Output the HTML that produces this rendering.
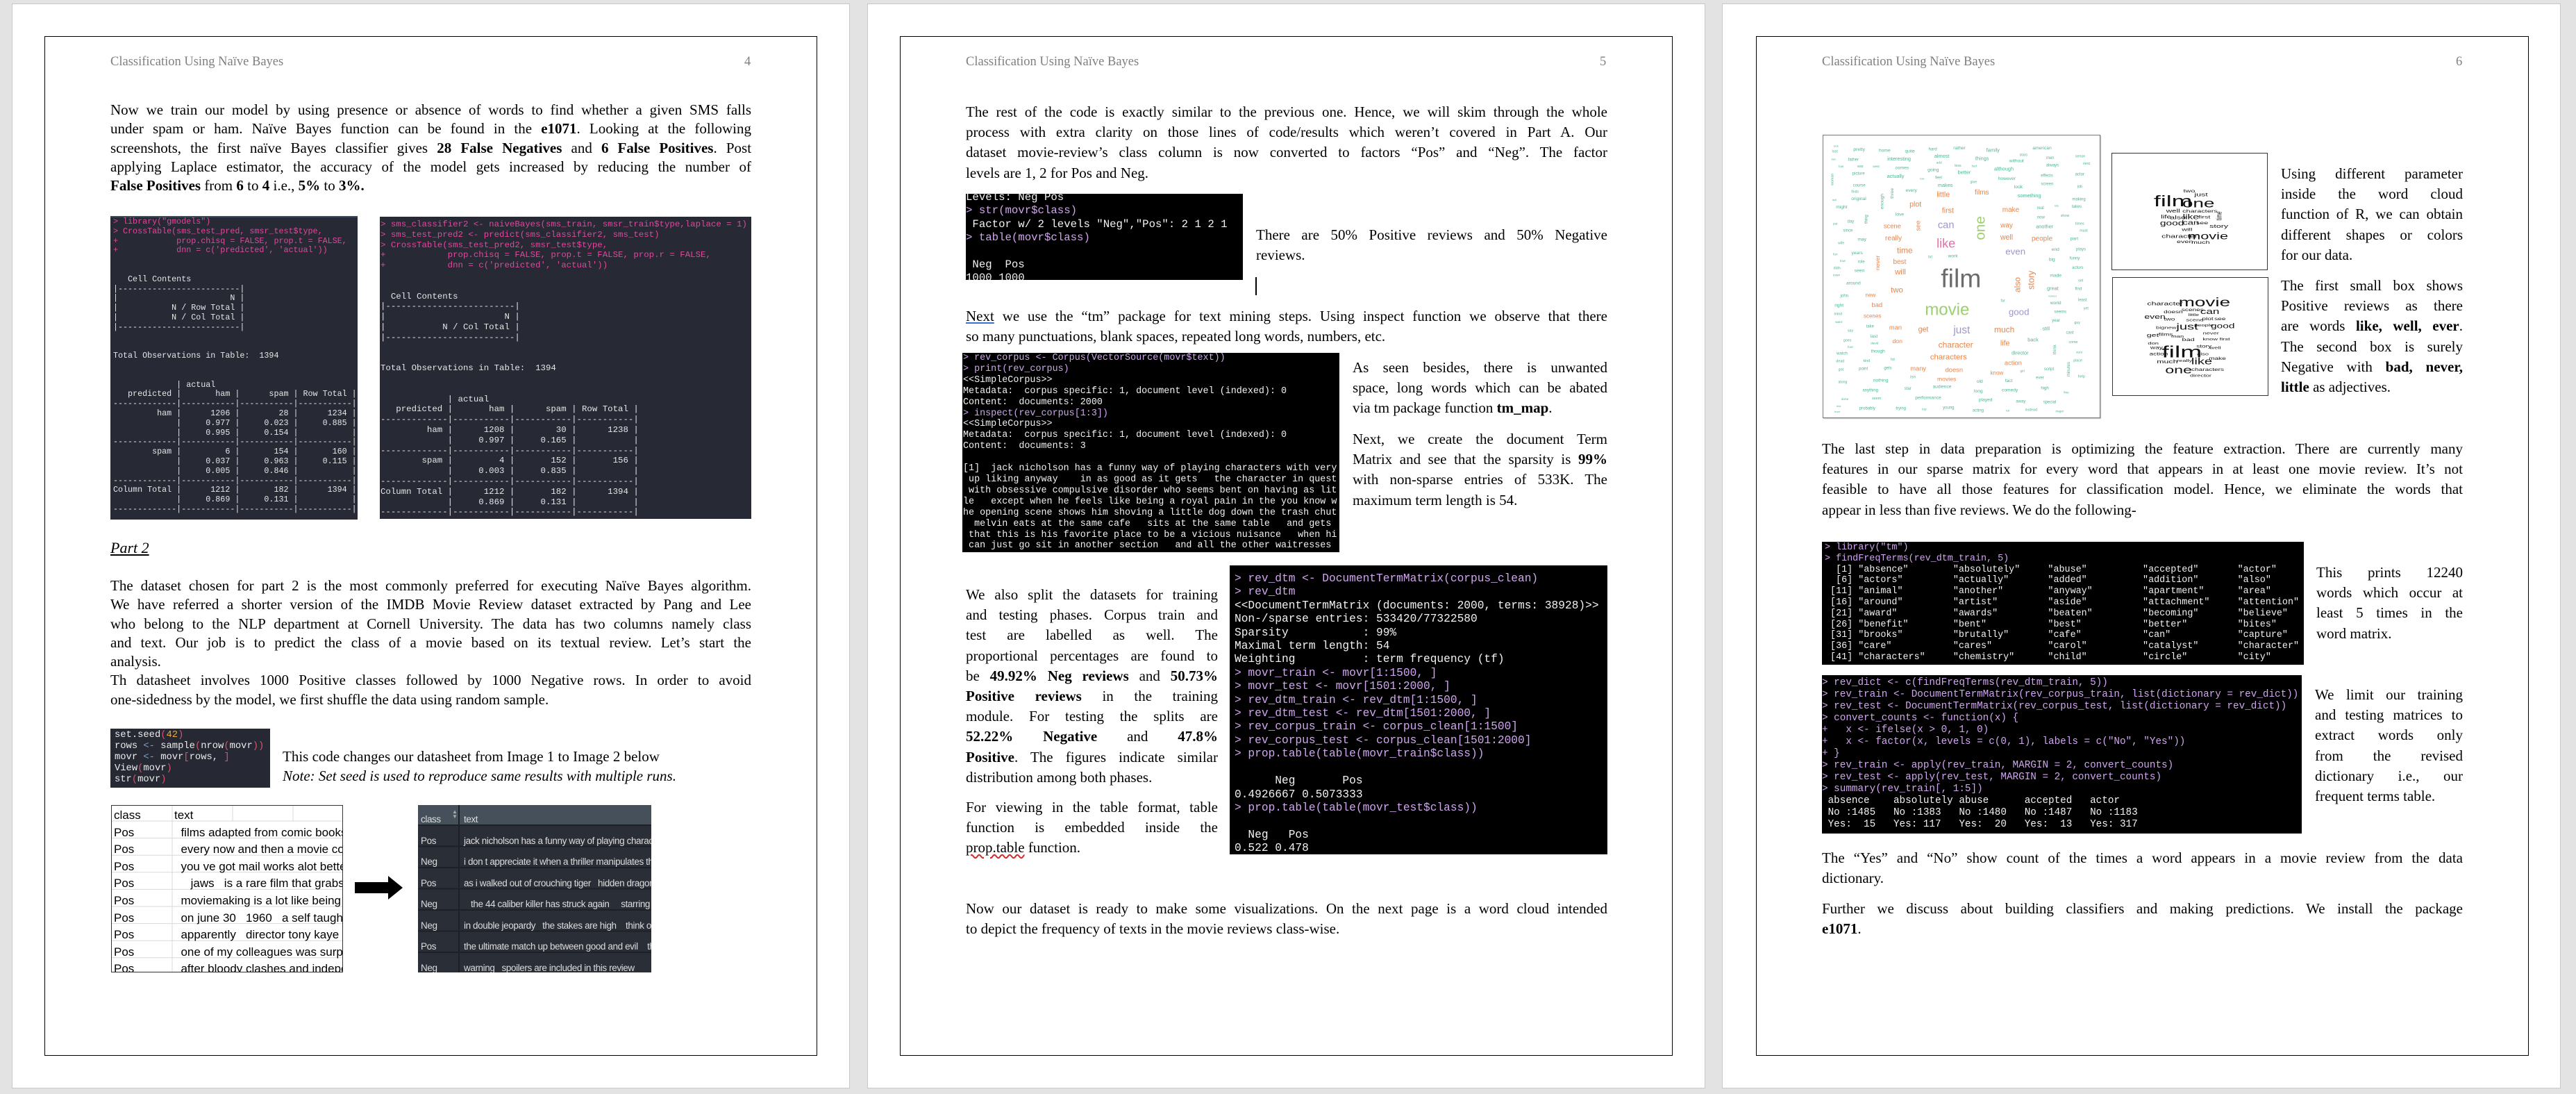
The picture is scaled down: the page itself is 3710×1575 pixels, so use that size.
<!DOCTYPE html>
<html><head><meta charset="utf-8">
<style>
*{margin:0;padding:0;box-sizing:border-box}
body{width:3710px;height:1575px;background:#e3e3e3;position:relative;overflow:hidden;font-family:"Liberation Serif",serif;color:#000}
.pg{position:absolute;top:5px;height:1562px;background:#fff;border:1px solid #c8c8c8}
.bx{position:absolute;border:1.5px solid #000}
.a{position:absolute}
.hd{position:absolute;font-size:18.5px;color:#7f7f7f;line-height:20px}
.t{position:absolute;font-size:21px}
.t div{white-space:nowrap;text-align:justify;text-align-last:justify}
.t div.l{text-align-last:left}
.p1 div{height:27.3px;line-height:27.3px}
.p2 div{height:29.2px;line-height:29.2px}
pre{font-family:"Liberation Mono",monospace;white-space:pre;margin:0}
.cb{position:absolute;overflow:hidden}
.pk{color:#e0489c}
.pu{color:#cfa6ee}
</style></head><body>

<!-- PAGES -->
<div class="pg" style="left:17px;width:1207px"></div>
<div class="pg" style="left:1249px;width:1207px"></div>
<div class="pg" style="left:2480px;width:1208px"></div>
<div class="bx" style="left:64px;top:52px;width:1113px;height:1468px"></div>
<div class="bx" style="left:1296px;top:52px;width:1113px;height:1468px"></div>
<div class="bx" style="left:2529px;top:52px;width:1113px;height:1468px"></div>

<!-- ================= PAGE 1 ================= -->
<div class="hd" style="left:159px;top:79px">Classification Using Naïve Bayes</div>
<div class="hd" style="left:1072px;top:79px">4</div>

<div class="t p1" style="left:159px;top:145px;width:923px">
<div>Now we train our model by using presence or absence of words to find whether a given SMS falls</div>
<div>under spam or ham. Naïve Bayes function can be found in the <b>e1071</b>. Looking at the following</div>
<div>screenshots, the first naïve Bayes classifier gives <b>28 False Negatives</b> and <b>6 False Positives</b>. Post</div>
<div>applying Laplace estimator, the accuracy of the model gets increased by reducing the number of</div>
<div class="l"><b>False Positives</b> from <b>6</b> to <b>4</b> i.e., <b>5%</b> to <b>3%.</b></div>
</div>

<div class="cb" style="left:159px;top:311px;width:356px;height:437px;background:#272935;border-top:2px solid #3a4a5a">
<pre style="font-size:11.7px;line-height:13.8px;color:#e6e6e6;padding:0 0 0 4px"><span class="pk">&gt; library("gmodels")
&gt; CrossTable(sms_test_pred, smsr_test$type,
+            prop.chisq = FALSE, prop.t = FALSE,
+            dnn = c('predicted', 'actual'))</span>


   Cell Contents
|-------------------------|
|                       N |
|           N / Row Total |
|           N / Col Total |
|-------------------------|


Total Observations in Table:  1394


             | actual 
   predicted |       ham |      spam | Row Total | 
-------------|-----------|-----------|-----------|
         ham |      1206 |        28 |      1234 | 
             |     0.977 |     0.023 |     0.885 | 
             |     0.995 |     0.154 |           | 
-------------|-----------|-----------|-----------|
        spam |         6 |       154 |       160 | 
             |     0.037 |     0.963 |     0.115 | 
             |     0.005 |     0.846 |           | 
-------------|-----------|-----------|-----------|
Column Total |      1212 |       182 |      1394 | 
             |     0.869 |     0.131 |           | 
-------------|-----------|-----------|-----------|</pre></div>

<div class="cb" style="left:547px;top:312px;width:535px;height:435px;background:#272935">
<pre style="font-size:12.4px;line-height:14.8px;color:#e6e6e6;padding:4px 0 0 1px"><span class="pk">&gt; sms_classifier2 &lt;- naiveBayes(sms_train, smsr_train$type,laplace = 1)
&gt; sms_test_pred2 &lt;- predict(sms_classifier2, sms_test)
&gt; CrossTable(sms_test_pred2, smsr_test$type,
+            prop.chisq = FALSE, prop.t = FALSE, prop.r = FALSE,
+            dnn = c('predicted', 'actual'))</span>


  Cell Contents
|-------------------------|
|                       N |
|           N / Col Total |
|-------------------------|


Total Observations in Table:  1394


             | actual 
   predicted |       ham |      spam | Row Total | 
-------------|-----------|-----------|-----------|
         ham |      1208 |        30 |      1238 | 
             |     0.997 |     0.165 |           | 
-------------|-----------|-----------|-----------|
        spam |         4 |       152 |       156 | 
             |     0.003 |     0.835 |           | 
-------------|-----------|-----------|-----------|
Column Total |      1212 |       182 |      1394 | 
             |     0.869 |     0.131 |           | 
-------------|-----------|-----------|-----------|</pre></div>

<div class="a" style="left:159px;top:775px;font-size:22px;font-style:italic;text-decoration:underline;line-height:28px">Part 2</div>

<div class="t p1" style="left:159px;top:830px;width:923px">
<div>The dataset chosen for part 2 is the most commonly preferred for executing Naïve Bayes algorithm.</div>
<div>We have referred a shorter version of the IMDB Movie Review dataset extracted by Pang and Lee</div>
<div>who belong to the NLP department at Cornell University. The data has two columns namely class</div>
<div>and text. Our job is to predict the class of a movie based on its textual review. Let’s start the</div>
<div class="l">analysis.</div>
<div>Th datasheet involves 1000 Positive classes followed by 1000 Negative rows. In order to avoid</div>
<div class="l">one-sidedness by the model, we first shuffle the data using random sample.</div>
</div>

<div class="cb" style="left:159px;top:1049px;width:230px;height:85px;background:#262833">
<pre style="font-size:13.8px;line-height:16px;color:#ececec;padding:2px 0 0 6px">set.seed<span style="color:#e0506a">(</span><span style="color:#e8a84a">42</span><span style="color:#e0506a">)</span>
rows <span style="color:#7aa0c8">&lt;-</span> sample<span style="color:#e0506a">(</span>nrow<span style="color:#e0506a">(</span>movr<span style="color:#e0506a">))</span>
movr <span style="color:#7aa0c8">&lt;-</span> movr<span style="color:#e0506a">[</span>rows, <span style="color:#e0506a">]</span>
View<span style="color:#e0506a">(</span>movr<span style="color:#e0506a">)</span>
str<span style="color:#e0506a">(</span>movr<span style="color:#e0506a">)</span></pre></div>

<div class="t" style="left:407px;top:1075px;line-height:28px;white-space:nowrap">This code changes our datasheet from Image 1 to Image 2 below<br><i>Note: Set seed is used to reproduce same results with multiple runs.</i></div>

<!-- table 1 -->
<div class="a" style="left:160px;top:1159px;width:334px;height:241px;border:1.5px solid #333;overflow:hidden;background:#fff;font-family:'Liberation Sans',sans-serif;font-size:17px">
<svg width="334" height="241" style="position:absolute;left:0;top:0">
<g stroke="#dadada" stroke-width="1">
<line x1="87" y1="0" x2="87" y2="241"/><line x1="174" y1="0" x2="174" y2="22"/><line x1="261" y1="0" x2="261" y2="22"/>
<line x1="0" y1="22" x2="334" y2="22"/><line x1="0" y1="46.6" x2="334" y2="46.6"/><line x1="0" y1="71.2" x2="334" y2="71.2"/><line x1="0" y1="95.8" x2="334" y2="95.8"/><line x1="0" y1="120.4" x2="334" y2="120.4"/><line x1="0" y1="145" x2="334" y2="145"/><line x1="0" y1="169.6" x2="334" y2="169.6"/><line x1="0" y1="194.2" x2="334" y2="194.2"/><line x1="0" y1="218.8" x2="334" y2="218.8"/>
</g></svg>
<div class="a" style="left:3px;top:2px;line-height:24.6px;white-space:pre">class<br>Pos<br>Pos<br>Pos<br>Pos<br>Pos<br>Pos<br>Pos<br>Pos<br>Pos</div>
<div class="a" style="left:90px;top:2px;line-height:24.6px;white-space:pre">text<br>  films adapted from comic books<br>  every now and then a movie comes<br>  you ve got mail works alot better<br>     jaws   is a rare film that grabs<br>  moviemaking is a lot like being<br>  on june 30   1960   a self taught<br>  apparently   director tony kaye<br>  one of my colleagues was surprised<br>  after bloody clashes and independence</div>
</div>

<!-- arrow -->
<svg class="a" style="left:511px;top:1261px" width="70" height="35"><polygon points="0,9 48,9 48,0 69,17 48,34 48,25 0,25" fill="#000"/></svg>

<!-- table 2 -->
<div class="a" style="left:602px;top:1159px;width:336px;height:241px;background:#2a2e37;overflow:hidden;font-family:'Liberation Sans',sans-serif;font-size:13.5px;color:#dcdcdc;letter-spacing:-0.4px">
<div class="a" style="left:0;top:0;width:336px;height:29px;background:#46505b"></div>
<div class="a" style="left:58px;top:0;width:2px;height:241px;background:#1d2027"></div>
<svg width="336" height="241" style="position:absolute;left:0;top:0"><g stroke="#1d2027" stroke-width="2">
<line x1="0" y1="29" x2="336" y2="29"/><line x1="0" y1="59.5" x2="336" y2="59.5"/><line x1="0" y1="90" x2="336" y2="90"/><line x1="0" y1="120.5" x2="336" y2="120.5"/><line x1="0" y1="151" x2="336" y2="151"/><line x1="0" y1="181.5" x2="336" y2="181.5"/><line x1="0" y1="212" x2="336" y2="212"/></g>
<text x="49" y="12" fill="#aaa" font-size="8" font-family="Liberation Sans">▲</text><text x="49" y="19" fill="#aaa" font-size="8" font-family="Liberation Sans">▼</text></svg>
<div class="a" style="left:4px;top:6px;line-height:30.5px;white-space:pre">class<br>Pos<br>Neg<br>Pos<br>Neg<br>Neg<br>Pos<br>Neg</div>
<div class="a" style="left:66px;top:6px;line-height:30.5px;white-space:pre">text<br>jack nicholson has a funny way of playing characters<br>i don t appreciate it when a thriller manipulates the<br>as i walked out of crouching tiger   hidden dragon<br>   the 44 caliber killer has struck again     starring j<br>in double jeopardy   the stakes are high    think of<br>the ultimate match up between good and evil    the<br>warning   spoilers are included in this review       b</div>
</div>

<!-- ================= PAGE 2 ================= -->
<div class="hd" style="left:1391px;top:79px">Classification Using Naïve Bayes</div>
<div class="hd" style="left:2304px;top:79px">5</div>

<div class="t p2" style="left:1391px;top:147px;width:924px">
<div>The rest of the code is exactly similar to the previous one. Hence, we will skim through the whole</div>
<div>process with extra clarity on those lines of code/results which weren’t covered in Part A. Our</div>
<div>dataset movie-review’s class column is now converted to factors “Pos” and “Neg”. The factor</div>
<div class="l">levels are 1, 2 for Pos and Neg.</div>
</div>

<div class="cb" style="left:1391px;top:279px;width:399px;height:124px;background:#000">
<pre style="font-size:15.7px;line-height:19.4px;color:#f2f2f2;margin-top:-4px">Levels: Neg Pos
<span class="pu">&gt; str(movr$class)</span>
 Factor w/ 2 levels "Neg","Pos": 2 1 2 1
<span class="pu">&gt; table(movr$class)</span>

 Neg  Pos 
1000 1000 </pre></div>

<div class="t p2" style="left:1809px;top:324px;width:506px">
<div>There are 50% Positive reviews and 50% Negative</div>
<div class="l">reviews.</div>
</div>
<div class="a" style="left:1808px;top:399px;width:2px;height:26px;background:#000"></div>

<div class="t p2" style="left:1391px;top:441px;width:924px">
<div><span style="text-decoration:underline;text-decoration-color:#3b6fd0">Next</span> we use the “tm” package for text mining steps. Using inspect function we observe that there</div>
<div class="l">so many punctuations, blank spaces, repeated long words, numbers, etc.</div>
</div>

<div class="cb" style="left:1386px;top:508px;width:543px;height:287px;background:#000">
<pre style="font-size:13.4px;line-height:15.9px;color:#f2f2f2;padding-left:1px"><span class="pu">&gt; rev_corpus &lt;- Corpus(VectorSource(movr$text))
&gt; print(rev_corpus)</span>
&lt;&lt;SimpleCorpus&gt;&gt;
Metadata:  corpus specific: 1, document level (indexed): 0
Content:  documents: 2000
<span class="pu">&gt; inspect(rev_corpus[1:3])</span>
&lt;&lt;SimpleCorpus&gt;&gt;
Metadata:  corpus specific: 1, document level (indexed): 0
Content:  documents: 3

[1]  jack nicholson has a funny way of playing characters with very
 up liking anyway    in as good as it gets   the character in quest
 with obsessive compulsive disorder who seems bent on having as lit
le   except when he feels like being a royal pain in the you know w
he opening scene shows him shoving a little dog down the trash chut
  melvin eats at the same cafe   sits at the same table   and gets
 that this is his favorite place to be a vicious nuisance   when hi
 can just go sit in another section   and all the other waitresses</pre></div>

<div class="t p2" style="left:1948px;top:515px;width:367px">
<div>As seen besides, there is unwanted</div>
<div>space, long words which can be abated</div>
<div class="l">via tm package function <b>tm_map</b>.</div>
</div>
<div class="t p2" style="left:1948px;top:618px;width:367px">
<div>Next, we create the document Term</div>
<div>Matrix and see that the sparsity is <b>99%</b></div>
<div>with non-sparse entries of 533K. The</div>
<div class="l">maximum term length is 54.</div>
</div>

<div class="t p2" style="left:1391px;top:842px;width:363px">
<div>We also split the datasets for training</div>
<div>and testing phases. Corpus train and</div>
<div>test are labelled as well. The</div>
<div>proportional percentages are found to</div>
<div>be <b>49.92% Neg reviews</b> and <b>50.73%</b></div>
<div><b>Positive reviews</b> in the training</div>
<div>module. For testing the splits are</div>
<div><b>52.22% Negative</b> and <b>47.8%</b></div>
<div><b>Positive</b>. The figures indicate similar</div>
<div class="l">distribution among both phases.</div>
</div>
<div class="t p2" style="left:1391px;top:1148px;width:363px">
<div>For viewing in the table format, table</div>
<div>function is embedded inside the</div>
<div class="l"><span style="text-decoration:underline wavy #d03030">prop.table</span> function.</div>
</div>

<div class="cb" style="left:1771px;top:814px;width:544px;height:416px;background:#000">
<pre style="font-size:16.2px;line-height:19.4px;color:#f2f2f2;padding:10px 0 0 7px"><span class="pu">&gt; rev_dtm &lt;- DocumentTermMatrix(corpus_clean)
&gt; rev_dtm</span>
&lt;&lt;DocumentTermMatrix (documents: 2000, terms: 38928)&gt;&gt;
Non-/sparse entries: 533420/77322580
Sparsity           : 99%
Maximal term length: 54
Weighting          : term frequency (tf)
<span class="pu">&gt; movr_train &lt;- movr[1:1500, ]
&gt; movr_test &lt;- movr[1501:2000, ]
&gt; rev_dtm_train &lt;- rev_dtm[1:1500, ]
&gt; rev_dtm_test &lt;- rev_dtm[1501:2000, ]
&gt; rev_corpus_train &lt;- corpus_clean[1:1500]
&gt; rev_corpus_test &lt;- corpus_clean[1501:2000]
&gt; prop.table(table(movr_train$class))</span>

      Neg       Pos 
0.4926667 0.5073333 
<span class="pu">&gt; prop.table(table(movr_test$class))</span>

  Neg   Pos 
0.522 0.478 </pre></div>

<div class="t p2" style="left:1391px;top:1294px;width:924px">
<div>Now our dataset is ready to make some visualizations. On the next page is a word cloud intended</div>
<div class="l">to depict the frequency of texts in the movie reviews class-wise.</div>
</div>

<!-- ================= PAGE 3 ================= -->
<div class="hd" style="left:2624px;top:79px">Classification Using Naïve Bayes</div>
<div class="hd" style="left:3537px;top:79px">6</div>

<div class="a" style="left:2625px;top:194px;width:400px;height:408px;border:1px solid #777;box-shadow:1px 1px 1px #bbb;background:#fff;overflow:hidden">
<svg width="400" height="408" viewBox="0 0 1200 1224" font-family="Liberation Sans, sans-serif" text-anchor="middle">
<g fill="#4db590">
<text x="155" y="66" font-size="20">pretty</text><text x="265" y="71" font-size="20">home</text><text x="374" y="73" font-size="20">quite</text><text x="473" y="64" font-size="18">hard</text><text x="588" y="60" font-size="20">rather</text><text x="733" y="71" font-size="22">family</text><text x="945" y="60" font-size="20">american</text><text x="55" y="50" font-size="12">luck</text><text x="50" y="73" font-size="16">lost</text><text x="45" y="107" font-size="12">ben</text><text x="130" y="110" font-size="18">father</text><text x="327" y="108" font-size="22">interesting</text><text x="512" y="96" font-size="22">almost</text><text x="686" y="107" font-size="22">things</text><text x="865" y="88" font-size="16">stars</text><text x="980" y="102" font-size="18">men</text><text x="1110" y="95" font-size="16">sense</text><text x="1137" y="126" font-size="16">next</text><text x="77" y="138" font-size="14">low</text><text x="160" y="138" font-size="16">war</text><text x="228" y="138" font-size="14">west</text><text x="340" y="145" font-size="20">comes</text><text x="500" y="122" font-size="14">add</text><text x="582" y="135" font-size="16">less</text><text x="652" y="136" font-size="13">hurt</text><text x="835" y="116" font-size="20">without</text><text x="990" y="133" font-size="18">always</text><text x="152" y="170" font-size="18">picture</text><text x="312" y="183" font-size="22">actually</text><text x="475" y="155" font-size="20">going</text><text x="609" y="167" font-size="22">better</text><text x="780" y="151" font-size="22">although</text><text x="1108" y="172" font-size="18">actor</text><text x="498" y="188" font-size="18">feel</text><text x="427" y="190" font-size="12">low</text><text x="793" y="192" font-size="20">however</text><text x="966" y="178" font-size="18">effects</text><text x="155" y="220" font-size="18">course</text><text x="527" y="222" font-size="22">makes</text><text x="649" y="206" font-size="16">give</text><text x="843" y="228" font-size="20">look</text><text x="967" y="214" font-size="18">screen</text><text x="1108" y="225" font-size="16">job</text><text x="137" y="247" font-size="15">finds</text><text x="380" y="243" font-size="20">every</text><text x="153" y="279" font-size="20">original</text><text x="890" y="267" font-size="22">something</text><text x="1104" y="280" font-size="18">making</text><text x="48" y="282" font-size="12">dull</text><text x="79" y="315" font-size="20">might</text><text x="1095" y="312" font-size="18">takes</text><text x="938" y="318" font-size="18">real</text><text x="330" y="347" font-size="20">love</text><text x="1008" y="307" font-size="12">lots</text><text x="940" y="359" font-size="18">now</text><text x="1044" y="351" font-size="16">show</text><text x="118" y="377" font-size="18">day</text><text x="52" y="386" font-size="14">put</text><text x="956" y="400" font-size="22">another</text><text x="1108" y="386" font-size="16">times</text><text x="106" y="416" font-size="18">since</text><text x="1125" y="415" font-size="16">must</text><text x="167" y="455" font-size="20">may</text><text x="1084" y="451" font-size="20">part</text><text x="77" y="469" font-size="15">wife</text><text x="1113" y="497" font-size="18">plays</text><text x="52" y="518" font-size="14">fun</text><text x="146" y="513" font-size="20">years</text><text x="1003" y="498" font-size="20">end</text><text x="1086" y="536" font-size="18">funny</text><text x="462" y="529" font-size="16">bit</text><text x="560" y="527" font-size="20">work</text><text x="164" y="550" font-size="18">role</text><text x="84" y="546" font-size="14">true</text><text x="988" y="541" font-size="20">big</text><text x="59" y="577" font-size="16">didn</text><text x="156" y="590" font-size="20">seen</text><text x="1099" y="576" font-size="18">actors</text><text x="57" y="608" font-size="14">town</text><text x="1004" y="611" font-size="20">made</text><text x="130" y="643" font-size="20">around</text><text x="1112" y="632" font-size="16">set</text><text x="991" y="667" font-size="22">great</text><text x="1102" y="667" font-size="18">find</text><text x="91" y="698" font-size="18">john</text><text x="990" y="697" font-size="12">turned</text><text x="68" y="740" font-size="20">right</text><text x="1120" y="716" font-size="18">least</text><text x="1004" y="729" font-size="20">world</text><text x="776" y="719" font-size="16">far</text><text x="64" y="775" font-size="16">mind</text><text x="1024" y="766" font-size="18">seems</text><text x="1135" y="752" font-size="16">yet</text><text x="66" y="810" font-size="14">want</text><text x="1005" y="804" font-size="18">year</text><text x="1097" y="813" font-size="16">guy</text><text x="202" y="829" font-size="18">take</text><text x="117" y="848" font-size="16">say</text><text x="962" y="842" font-size="22">still</text><text x="1065" y="856" font-size="18">cast</text><text x="219" y="873" font-size="20">last</text><text x="104" y="890" font-size="16">goes</text><text x="906" y="890" font-size="22">back</text><text x="1080" y="897" font-size="16">come</text><text x="221" y="902" font-size="14">david</text><text x="117" y="918" font-size="14">four</text><text x="236" y="937" font-size="20">though</text><text x="850" y="947" font-size="22">director</text><text x="1106" y="941" font-size="14">sure</text><text x="81" y="947" font-size="18">watch</text><text x="73" y="980" font-size="16">dead</text><text x="187" y="978" font-size="16">kind</text><text x="300" y="972" font-size="16">lot</text><text x="1100" y="976" font-size="16">place</text><text x="76" y="1015" font-size="16">got</text><text x="173" y="1012" font-size="18">point</text><text x="279" y="1010" font-size="18">gets</text><text x="975" y="1014" font-size="18">script</text><text x="860" y="1022" font-size="14">girl</text><text x="84" y="1069" font-size="16">along</text><text x="387" y="1049" font-size="18">isn</text><text x="676" y="1068" font-size="20">old</text><text x="801" y="1065" font-size="20">fact</text><text x="936" y="1051" font-size="18">ever</text><text x="1115" y="1046" font-size="16">help</text><text x="248" y="1064" font-size="20">nothing</text><text x="513" y="1091" font-size="20">audience</text><text x="365" y="1098" font-size="18">star</text><text x="957" y="1097" font-size="18">high</text><text x="203" y="1105" font-size="18">anything</text><text x="670" y="1110" font-size="20">long</text><text x="806" y="1105" font-size="20">comedy</text><text x="1050" y="1115" font-size="14">fine</text><text x="93" y="1143" font-size="14">done</text><text x="230" y="1140" font-size="16">seem</text><text x="453" y="1139" font-size="20">performance</text><text x="701" y="1148" font-size="20">played</text><text x="853" y="1153" font-size="18">away</text><text x="978" y="1157" font-size="18">special</text><text x="190" y="1184" font-size="18">probably</text><text x="335" y="1184" font-size="18">trying</text><text x="436" y="1186" font-size="14">top</text><text x="541" y="1181" font-size="18">young</text><text x="669" y="1192" font-size="18">acting</text><text x="797" y="1192" font-size="12">full</text><text x="898" y="1190" font-size="16">instead</text><text x="1021" y="1195" font-size="14">major</text><text x="66" y="1173" font-size="12">rest</text><text x="60" y="1197" font-size="12">boot</text>
<text transform="translate(303,250) rotate(-90)" font-size="20">three</text><text transform="translate(260,285) rotate(-90)" font-size="20">enough</text><text transform="translate(190,362) rotate(-90)" font-size="18">thing</text><text transform="translate(44,190) rotate(-90)" font-size="16">woman</text><text transform="translate(1005,925) rotate(-90)" font-size="20">think</text><text transform="translate(1065,1010) rotate(-90)" font-size="18">minutes</text>
</g>
<g fill="#e8854a">
<text x="352" y="508" font-size="36">time</text><text x="518" y="265" font-size="32">little</text><text x="685" y="255" font-size="30">films</text><text x="398" y="308" font-size="32">plot</text><text x="538" y="335" font-size="32">first</text><text x="810" y="330" font-size="30">make</text><text x="298" y="400" font-size="28">scene</text><text x="303" y="453" font-size="30">really</text><text x="792" y="398" font-size="30">way</text><text x="792" y="450" font-size="32">well</text><text x="945" y="455" font-size="30">people</text><text x="330" y="555" font-size="30">best</text><text x="333" y="600" font-size="34">will</text><text x="318" y="678" font-size="34">two</text><text x="204" y="697" font-size="24">new</text><text x="232" y="741" font-size="28">bad</text><text x="212" y="788" font-size="24">scenes</text><text x="312" y="838" font-size="28">man</text><text x="432" y="847" font-size="32">get</text><text x="782" y="850" font-size="36">much</text><text x="320" y="897" font-size="26">don</text><text x="785" y="908" font-size="32">life</text><text x="572" y="917" font-size="36">character</text><text x="541" y="968" font-size="34">characters</text><text x="820" y="991" font-size="28">action</text><text x="410" y="1015" font-size="28">many</text><text x="565" y="1022" font-size="28">doesn</text><text x="750" y="1033" font-size="24">know</text><text x="533" y="1060" font-size="26">movies</text>
<text transform="translate(418,390) rotate(-90)" font-size="28">see</text><text transform="translate(243,550) rotate(-90)" font-size="26">never</text><text transform="translate(850,645) rotate(-90)" font-size="36">also</text><text transform="translate(910,625) rotate(-90)" font-size="38">story</text>
</g>
<text x="595" y="655" font-size="112" fill="#6b6b6b">film</text>
<text x="535" y="775" font-size="72" fill="#9ccf72">movie</text>
<text transform="translate(698,400) rotate(-90)" font-size="62" fill="#9ccf72">one</text>
<text x="530" y="485" font-size="54" fill="#ee6aaa">like</text>
<text x="530" y="400" font-size="44" fill="#9c98cc">can</text>
<text x="830" y="515" font-size="40" fill="#9c98cc">even</text>
<text x="845" y="775" font-size="40" fill="#9c98cc">good</text>
<text x="598" y="855" font-size="46" fill="#9c98cc">just</text>
</svg></div>

<div class="a" style="left:3041px;top:220px;width:225px;height:169px;border:1px solid #333;overflow:hidden">
<svg width="225" height="169" viewBox="0 0 290 348" preserveAspectRatio="none" font-family="Liberation Sans, sans-serif" text-anchor="middle" fill="#111">
<text x="143" y="115" font-size="14">two</text><text x="165" y="127" font-size="16">just</text><text x="113" y="157" font-size="46">film</text><text x="160" y="160" font-size="36">one</text><text x="113" y="175" font-size="15">well</text><text x="163" y="175" font-size="14">characters</text><text x="100" y="193" font-size="15">life</text><text x="122" y="195" font-size="16">also</text><text x="146" y="195" font-size="20">like</text><text x="171" y="193" font-size="14">first</text><text x="111" y="213" font-size="20">good</text><text x="146" y="211" font-size="19">can</text><text x="167" y="210" font-size="14">see</text><text x="198" y="220" font-size="16">story</text><text x="139" y="230" font-size="14">will</text><text x="125" y="250" font-size="16">character</text><text x="178" y="254" font-size="28">movie</text><text x="135" y="266" font-size="14">even</text><text x="164" y="268" font-size="14">much</text><text transform="translate(203,185) rotate(-90)" font-size="14">time</text>
</svg></div>

<div class="a" style="left:3042px;top:399px;width:225px;height:171px;border:1px solid #333;overflow:hidden">
<svg width="225" height="171" viewBox="0 0 290 353" preserveAspectRatio="none" font-family="Liberation Sans, sans-serif" text-anchor="middle" fill="#111">
<text x="97" y="82" font-size="16">character</text><text x="170" y="85" font-size="36">movie</text><text x="112" y="105" font-size="13">doesn</text><text x="148" y="99" font-size="13">scenes</text><text x="180" y="107" font-size="22">can</text><text x="78" y="122" font-size="18">even</text><text x="105" y="127" font-size="13">two</text><text x="150" y="114" font-size="11">little</text><text x="152" y="129" font-size="12">scene</text><text x="176" y="126" font-size="13">plot</text><text x="199" y="126" font-size="13">see</text><text x="99" y="152" font-size="12">bignew</text><text x="138" y="154" font-size="26">just</text><text x="169" y="145" font-size="12">people</text><text x="204" y="150" font-size="20">good</text><text x="182" y="168" font-size="12">never</text><text x="74" y="175" font-size="16">get</text><text x="98" y="172" font-size="13">films</text><text x="120" y="178" font-size="12">man</text><text x="140" y="188" font-size="14">bad</text><text x="192" y="186" font-size="12">know first</text><text x="75" y="198" font-size="12">don</text><text x="81" y="212" font-size="13">way</text><text x="128" y="236" font-size="48">film</text><text x="169" y="207" font-size="13">story</text><text x="190" y="212" font-size="12">well</text><text x="85" y="230" font-size="13">action</text><text x="167" y="230" font-size="12">also</text><text x="194" y="244" font-size="13">make</text><text x="101" y="254" font-size="16">much</text><text x="133" y="250" font-size="12">really</text><text x="165" y="257" font-size="26">like</text><text x="122" y="284" font-size="30">one</text><text x="176" y="277" font-size="13">characters</text><text x="163" y="294" font-size="12">director</text>
</svg></div>

<div class="t p2" style="left:3285px;top:236px;width:262px">
<div>Using different parameter</div>
<div>inside the word cloud</div>
<div>function of R, we can obtain</div>
<div>different shapes or colors</div>
<div class="l">for our data.</div>
</div>
<div class="t p2" style="left:3285px;top:397px;width:262px">
<div>The first small box shows</div>
<div>Positive reviews as there</div>
<div>are words <b>like, well, ever</b>.</div>
<div>The second box is surely</div>
<div>Negative with <b>bad, never,</b></div>
<div class="l"><b>little</b> as adjectives.</div>
</div>

<div class="t p2" style="left:2624px;top:632px;width:923px">
<div>The last step in data preparation is optimizing the feature extraction. There are currently many</div>
<div>features in our sparse matrix for every word that appears in at least one movie review. It’s not</div>
<div>feasible to have all those features for classification model. Hence, we eliminate the words that</div>
<div class="l">appear in less than five reviews. We do the following-</div>
</div>

<div class="cb" style="left:2624px;top:780px;width:694px;height:177px;background:#000">
<pre style="font-size:13.4px;line-height:15.8px;color:#f2f2f2;padding:1px 0 0 4px"><span class="pu">&gt; library("tm")
&gt; findFreqTerms(rev_dtm_train, 5)</span>
  [1] "absence"        "absolutely"     "abuse"          "accepted"       "actor"
  [6] "actors"         "actually"       "added"          "addition"       "also"
 [11] "animal"         "another"        "anyway"         "apartment"      "area"
 [16] "around"         "artist"         "aside"          "attachment"     "attention"
 [21] "award"          "awards"         "beaten"         "becoming"       "believe"
 [26] "benefit"        "bent"           "best"           "better"         "bites"
 [31] "brooks"         "brutally"       "cafe"           "can"            "capture"
 [36] "care"           "cares"          "carol"          "catalyst"       "character"
 [41] "characters"     "chemistry"      "child"          "circle"         "city"</pre></div>

<div class="t p2" style="left:3336px;top:810px;width:211px">
<div>This prints 12240</div>
<div>words which occur at</div>
<div>least 5 times in the</div>
<div class="l">word matrix.</div>
</div>

<div class="cb" style="left:2624px;top:972px;width:691px;height:228px;background:#000">
<pre style="font-size:14.3px;line-height:17px;color:#f2f2f2;padding:3px 0 0 0"><span class="pu">&gt; rev_dict &lt;- c(findFreqTerms(rev_dtm_train, 5))
&gt; rev_train &lt;- DocumentTermMatrix(rev_corpus_train, list(dictionary = rev_dict))
&gt; rev_test &lt;- DocumentTermMatrix(rev_corpus_test, list(dictionary = rev_dict))
&gt; convert_counts &lt;- function(x) {
+   x &lt;- ifelse(x &gt; 0, 1, 0)
+   x &lt;- factor(x, levels = c(0, 1), labels = c("No", "Yes"))
+ }
&gt; rev_train &lt;- apply(rev_train, MARGIN = 2, convert_counts)
&gt; rev_test &lt;- apply(rev_test, MARGIN = 2, convert_counts)
&gt; summary(rev_train[, 1:5])</span>
 absence    absolutely abuse      accepted   actor     
 No :1485   No :1383   No :1480   No :1487   No :1183  
 Yes:  15   Yes: 117   Yes:  20   Yes:  13   Yes: 317  </pre></div>

<div class="t p2" style="left:3334px;top:986px;width:213px">
<div>We limit our training</div>
<div>and testing matrices to</div>
<div>extract words only</div>
<div>from the revised</div>
<div>dictionary i.e., our</div>
<div class="l">frequent terms table.</div>
</div>

<div class="t p2" style="left:2624px;top:1221px;width:923px">
<div>The “Yes” and “No” show count of the times a word appears in a movie review from the data</div>
<div class="l">dictionary.</div>
</div>
<div class="t p2" style="left:2624px;top:1294px;width:923px">
<div>Further we discuss about building classifiers and making predictions. We install the package</div>
<div class="l"><b>e1071</b>.</div>
</div>

</body></html>
